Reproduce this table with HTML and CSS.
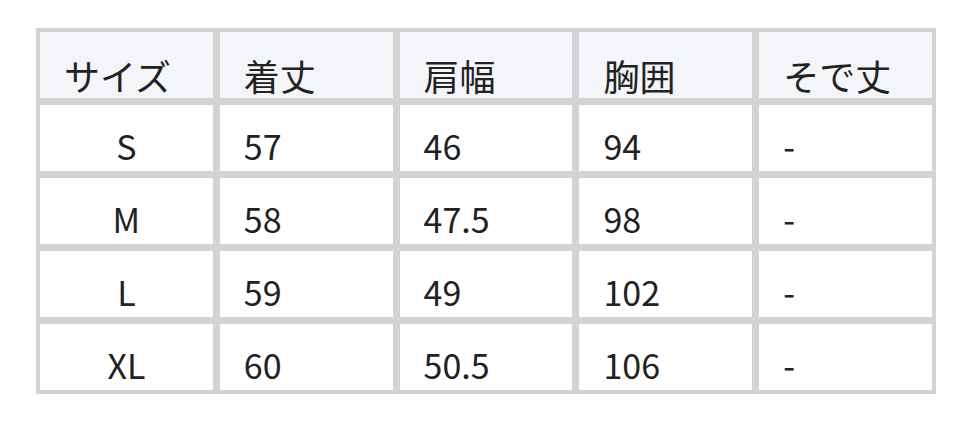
FILE: index.html
```html
<!DOCTYPE html>
<html lang="ja">
<head>
<meta charset="utf-8">
<link rel="stylesheet" href="styles.css">
</head>
<body>
<div class="wrap">
<table class="size-table">
  <thead>
    <tr><th>サイズ</th><th>着丈</th><th>肩幅</th><th>胸囲</th><th>そで丈</th></tr>
  </thead>
  <tbody>
    <tr><td class="size">S</td><td>57</td><td>46</td><td>94</td><td>-</td></tr>
    <tr><td class="size">M</td><td>58</td><td>47.5</td><td>98</td><td>-</td></tr>
    <tr><td class="size">L</td><td>59</td><td>49</td><td>102</td><td>-</td></tr>
    <tr><td class="size">XL</td><td>60</td><td>50.5</td><td>106</td><td>-</td></tr>
  </tbody>
</table>
</div>
</body>
</html>
```
FILE: styles.css
```css
html, body {
  margin: 0;
  padding: 0;
  background: #ffffff;
}
.wrap {
  padding: 28px 0 0 36px;
}
.size-table {
  width: 900px;
  table-layout: fixed;
  border-collapse: separate;
  border-spacing: 1px;
  background: #d3d3d3;
  font-family: "Noto Sans CJK JP", "Noto Sans", sans-serif;
  font-size: 34px;
  color: #222222;
}
.size-table th,
.size-table td {
  border: 3px solid #d3d3d3;
  height: 46px;
  line-height: 46px;
  padding: 18px 8px 2px 24px;
  text-align: left;
  font-weight: 400;
  background: #ffffff;
  white-space: nowrap;
}
.size-table th {
  background: #f4f5f9;
  font-size: 36px;
  padding-top: 20px;
  padding-bottom: 0;
}
.size-table td.size {
  text-align: center;
  padding-left: 8px;
}
```
